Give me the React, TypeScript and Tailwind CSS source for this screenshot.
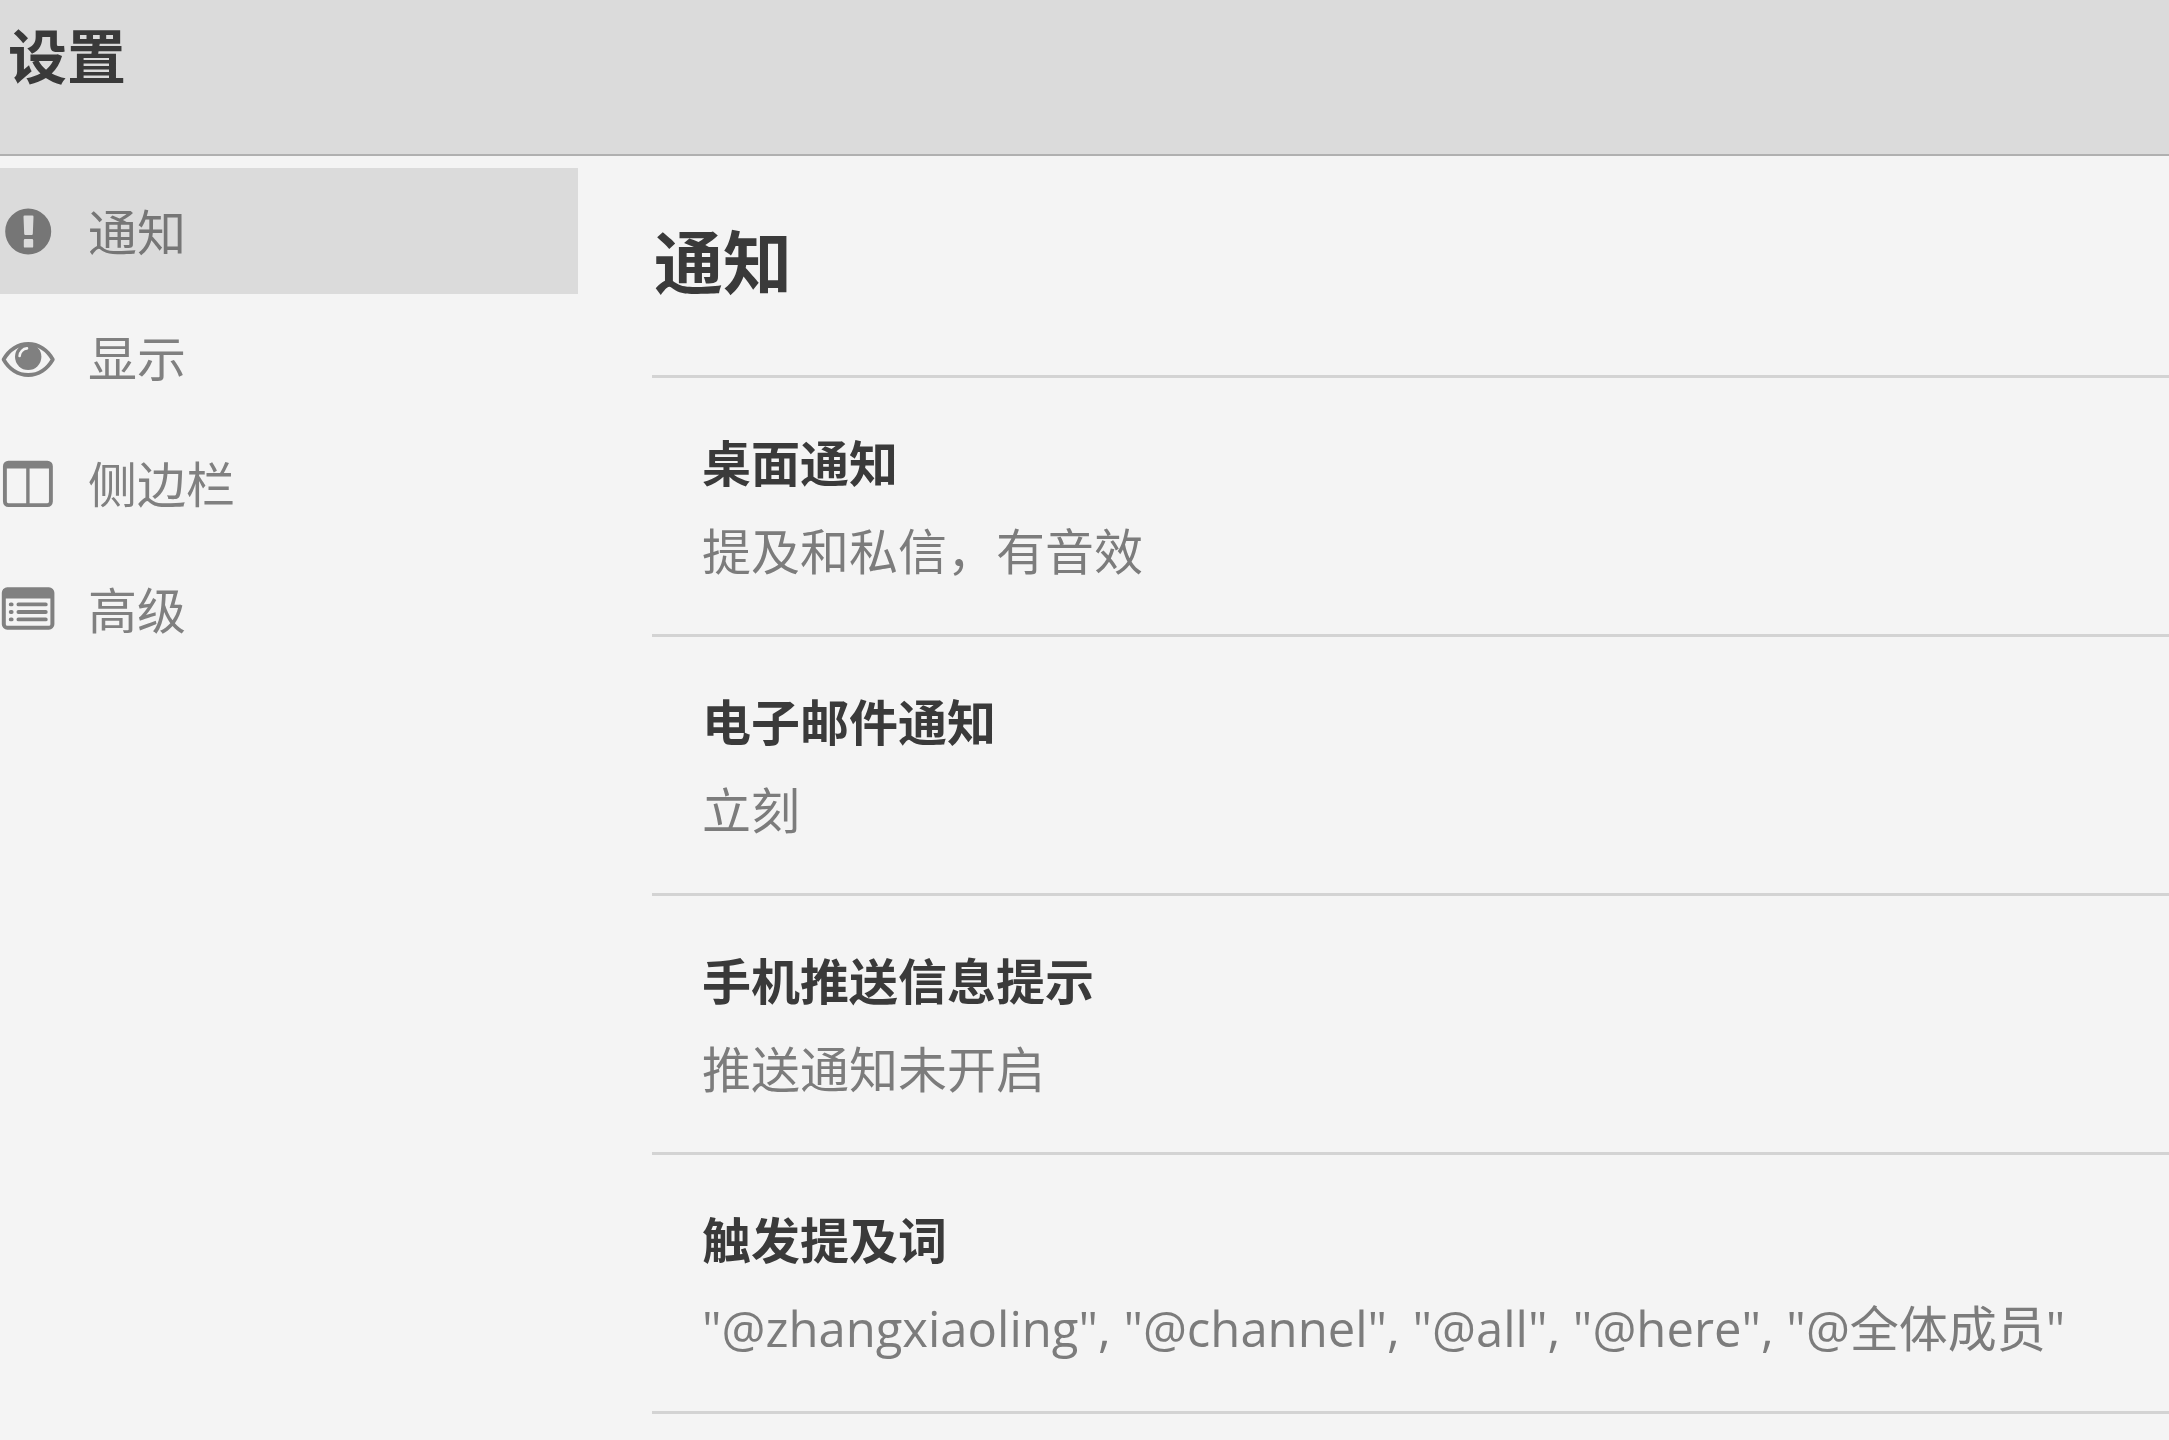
import type { ReactNode } from "react";

function Icon({ children }: { children: ReactNode }) {
  return (
    <svg viewBox="0 0 56 56" className="size-14 shrink-0" fill="none" aria-hidden="true">
      {children}
    </svg>
  );
}

const AlertIcon = () => (
  <Icon>
    <path
      fill="currentColor"
      fillRule="evenodd"
      d="M28.2 5.4a23 23 0 1 0 0 46a23 23 0 1 0 0-46ZM24.6 12.500h7.800q1.200 0 1.100 1.200l-.7 17.200q-.1 1-1.100 1h-6.400q-1 0-1.100-1l-.7-17.200q-.1-1.200 1.100-1.200ZM25 36h7q1.200 0 1.200 1.200v6.200q0 1.200-1.200 1.200h-7q-1.200 0-1.200-1.200v-6.200q0-1.200 1.200-1.200Z"
    />
  </Icon>
);

const EyeIcon = () => (
  <Icon>
    <path
      stroke="currentColor"
      strokeWidth="3.8"
      strokeLinejoin="round"
      d="M3.600 30.500C9 21 18 15 28.200 15S47.400 21 52.800 30.500C47.400 40 38.400 46 28.200 46S9 40 3.600 30.500Z"
    />
    <circle cx="28.200" cy="27.800" r="13.200" fill="currentColor" />
    <path className="stroke-[#f4f4f4]" strokeWidth="2.600" strokeLinecap="round" d="M19.600 27A8 8 0 0 1 27 19.400" />
  </Icon>
);

const ColumnsIcon = () => (
  <Icon>
    <rect x="4.900" y="7.700" width="46" height="42.400" rx="3.500" stroke="currentColor" strokeWidth="3.900" />
    <path fill="currentColor" d="M4 8h48v5.600H4Z" />
    <path stroke="currentColor" strokeWidth="3.400" d="M27.900 12v38" />
  </Icon>
);

const ListIcon = () => (
  <Icon>
    <rect x="3.800" y="8.300" width="48.600" height="38.400" rx="3.500" stroke="currentColor" strokeWidth="4" />
    <path fill="currentColor" d="M3 8h50v9.400H3Z" />
    <path stroke="currentColor" strokeWidth="3.800" strokeLinecap="round" d="M18.400 23.400h27.400M18.400 31h27.400M18.400 38.400h27.400" />
    <path stroke="currentColor" strokeWidth="3.800" strokeLinecap="round" d="M10.700 23.400h1M10.700 31h1M10.700 38.400h1" />
  </Icon>
);

const navItems = [
  { label: "通知", icon: AlertIcon, active: true },
  { label: "显示", icon: EyeIcon, active: false },
  { label: "侧边栏", icon: ColumnsIcon, active: false },
  { label: "高级", icon: ListIcon, active: false },
];

const settings = [
  { title: "桌面通知", value: "提及和私信，有音效" },
  { title: "电子邮件通知", value: "立刻" },
  { title: "手机推送信息提示", value: "推送通知未开启" },
  { title: "触发提及词", value: '"@zhangxiaoling", "@channel", "@all", "@here", "@全体成员"' },
];

export default function App() {
  return (
    <div className="min-h-screen bg-[#f4f4f4] font-['Open_Sans','Noto_Sans_CJK_SC',sans-serif] text-[#3a3a3a]">
      <header className="border-b-2 border-[#b0b0b0] bg-[#dbdbdb] px-2 pt-4 pb-[58px]">
        <h1 className="text-[59px] leading-[80px] font-semibold">设置</h1>
      </header>
      <div className="flex">
        <nav className="w-[578px] shrink-0 pt-3" aria-label="设置">
          {navItems.map(({ label, icon: NavIcon, active }) => (
            <button
              key={label}
              type="button"
              aria-current={active ? "page" : undefined}
              className={`flex h-[126px] w-full items-center gap-8 text-[49px] ${
                active ? "bg-[#dbdbdb] text-[#767676]" : "text-[#808080]"
              }`}
            >
              <NavIcon />
              <span className="pt-1">{label}</span>
            </button>
          ))}
        </nav>
        <main className="ml-[74px] min-w-0 flex-1">
          <h2 className="px-0.5 pt-[66px] pb-[73px] text-[69px] leading-[80px] font-semibold">通知</h2>
          <div className="border-b-3 border-[#d3d3d3]">
            {settings.map((s) => (
              <button
                key={s.title}
                type="button"
                className="block w-full border-t-3 border-[#d3d3d3] px-[50px] pt-[41px] pb-[39px] text-left text-[49px] leading-[88px]"
              >
                <span className="block font-semibold">{s.title}</span>
                <span className="block text-[#7c7c7c]">{s.value}</span>
              </button>
            ))}
          </div>
        </main>
      </div>
    </div>
  );
}
